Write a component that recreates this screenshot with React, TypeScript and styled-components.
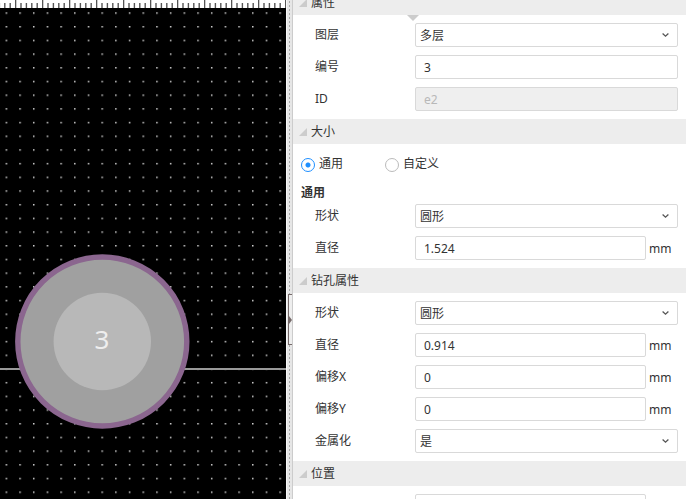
import React, { useId, useState } from "react";
import styled, { createGlobalStyle, css } from "styled-components";

const GlobalStyle = createGlobalStyle`
  *, *::before, *::after { box-sizing: border-box; }
  html, body, #root { height: 100%; }
  body {
    margin: 0;
    overflow: hidden;
    background: #fff;
    color: #333;
    font: 12px/24px "Noto Sans", "Noto Sans CJK SC", sans-serif;
  }
  input, select, button { font: inherit; color: inherit; margin: 0; }
`;

const Workspace = styled.div`
  display: grid;
  grid-template-columns: minmax(0, 286fr) 7px minmax(0, 393fr);
  height: 100vh;
  overflow: hidden;
`;

const CanvasPane = styled.main`
  display: flex;
  flex-direction: column;
  min-height: 0;
  background: #000;
  overflow: hidden;
`;

const Ruler = styled.svg`
  display: block;
  width: 100%;
  height: 8px;
  flex: none;
  background: #fff;
`;

const Board = styled.svg`
  display: block;
  width: 100%;
  flex: 1;
  min-height: 0;
`;

const Splitter = styled.div`
  display: flex;
  flex-direction: column;
  justify-content: center;
  padding: 140px 0 0 1px;
  border-left: 1px solid #f8f8f8;
  border-right: 1px solid #ccc;
  background-color: #e6e6e6;
  background-image: radial-gradient(circle, #aaa 0 1px, transparent 1px);
  background-size: 5px 4px;
`;

const CollapseButton = styled.button`
  display: flex;
  align-items: center;
  justify-content: flex-start;
  width: 4px;
  height: 51px;
  padding: 0;
  border: 1px solid #766a6a;
  border-right: 0;
  background: #eee;
  cursor: pointer;
`;

const Panel = styled.aside`
  min-width: 0;
  height: 100vh;
  overflow: hidden;
  background: #fff;
`;

const PanelScroll = styled.div`
  margin-top: -10px;
`;

const SectionHeader = styled.h2`
  display: flex;
  align-items: center;
  gap: 4px;
  height: 25px;
  margin: 0;
  padding-left: 6px;
  background: #ededed;
  font-size: 12px;
  font-weight: 400;
`;

const Fields = styled.div`
  position: relative;
  display: flex;
  flex-direction: column;
  gap: 8px;
  padding: 8px 8px 8px 22px;
`;

const DropMarker = styled.svg`
  position: absolute;
  top: 0;
  left: 114px;
`;

const Row = styled.div`
  display: grid;
  grid-template-columns: 100px minmax(0, 1fr);
  height: 24px;
`;

const Control = styled.div`
  position: relative;
  display: flex;
  gap: 3px;
`;

const box = css`
  flex: 1;
  min-width: 0;
  height: 24px;
  border: 1px solid #d9d9d9;
  border-radius: 2px;
  background: #fff;
  outline: none;
`;

const TextBox = styled.input`
  ${box}
  padding: 2px 8px 0;
  &:disabled {
    background: #efefef;
    color: #b8b8b8;
  }
`;

const SelectBox = styled.select`
  ${box}
  appearance: none;
  padding: 0 24px 0 4px;
`;

const Chevron = styled.svg`
  position: absolute;
  right: 9px;
  top: 10px;
  pointer-events: none;
`;

const Unit = styled.span`
  width: 29px;
  line-height: 26px;
`;

const ModeGroup = styled.div`
  display: flex;
  gap: 42px;
  height: 24px;
  margin: 8px 8px 4px;
`;

const ModeLabel = styled.label`
  display: flex;
  align-items: center;
  gap: 4px;
`;

const Radio = styled.input`
  appearance: none;
  width: 14px;
  height: 14px;
  border: 1px solid #bbb;
  border-radius: 50%;
  background: #fff;
  && { margin-top: 2px; }
  &:checked {
    border-color: #1e8fff;
    background: radial-gradient(circle, #1e8fff 0 2px, #fff 3px);
  }
`;

const GroupTitle = styled.h3`
  height: 24px;
  margin: 0 8px -8px;
  font-size: 12px;
  line-height: 26px;
  font-weight: 700;
`;

function Section({ title, children }: { title: string; children: React.ReactNode }) {
  return (
    <section>
      <SectionHeader>
        <svg width="8" height="8" viewBox="0 0 8 8" aria-hidden="true">
          <path d="M8 0V8H0Z" fill="#ccc" />
        </svg>
        {title}
      </SectionHeader>
      {children}
    </section>
  );
}

type FieldProps = { label?: string; value: string; unit?: string; disabled?: boolean };

function TextField({ label, value, unit, disabled }: FieldProps) {
  const id = useId();
  return (
    <Row>
      <label htmlFor={id}>{label}</label>
      <Control>
        <TextBox id={id} type="text" defaultValue={value} disabled={disabled} />
        {unit !== undefined && <Unit>{unit}</Unit>}
      </Control>
    </Row>
  );
}

function SelectField({ label, value }: FieldProps) {
  const id = useId();
  return (
    <Row>
      <label htmlFor={id}>{label}</label>
      <Control>
        <SelectBox id={id} defaultValue={value}>
          <option>{value}</option>
        </SelectBox>
        <Chevron width="7" height="5" viewBox="0 0 7 5" aria-hidden="true">
          <path d="M0.6 0.6L3.5 3.2L6.4 0.6" fill="none" stroke="#555" strokeWidth="1.3" />
        </Chevron>
      </Control>
    </Row>
  );
}

function PadCanvas() {
  return (
    <CanvasPane>
      <Ruler aria-hidden="true">
        <defs>
          <pattern id="ticks" x="15" width="27" height="8" patternUnits="userSpaceOnUse">
            <path d="M0.5 0V8" stroke="#555" />
            <path d="M1.5 0V8" stroke="#ccc" />
            <path d="M6 3V8M11.4 3V8M16.8 3V8M22.2 3V8" stroke="#555" strokeWidth="1.4" />
          </pattern>
        </defs>
        <rect width="100%" height="8" fill="url(#ticks)" />
      </Ruler>
      <Board role="img" aria-label="3">
        <defs>
          <pattern id="grid" x="5.6" y="4.3" width="13.69" height="13.69" patternUnits="userSpaceOnUse">
            <rect width="1.5" height="1.5" fill="#d0d0d0" />
          </pattern>
        </defs>
        <rect width="100%" height="100%" fill="url(#grid)" />
        <rect y="360" width="100%" height="2" fill="#999" />
        <circle cx="102.3" cy="333.5" r="84.5" fill="#a0a0a0" stroke="#8b668f" strokeWidth="5.4" />
        <circle cx="102.3" cy="333.5" r="48.7" fill="#b8b8b8" />
        <text x="102" y="341" textAnchor="middle" fontFamily="Noto Sans, sans-serif" fontSize="26" fill="#eee">
          3
        </text>
      </Board>
    </CanvasPane>
  );
}

export default function App() {
  const [mode, setMode] = useState("通用");
  return (
    <>
      <GlobalStyle />
      <Workspace>
        <PadCanvas />
        <Splitter>
          <CollapseButton aria-label="折叠">
            <svg width="3" height="8" viewBox="0 0 3 8" aria-hidden="true">
              <path d="M0 0L3 4L0 8Z" fill="#766a6a" />
            </svg>
          </CollapseButton>
        </Splitter>
        <Panel>
          <PanelScroll>
            <Section title="属性">
              <Fields>
                <DropMarker width="12" height="6" viewBox="0 0 12 6" aria-hidden="true">
                  <path d="M0 0H12L6 6Z" fill="#ccc" />
                </DropMarker>
                <SelectField label="图层" value="多层" />
                <TextField label="编号" value="3" />
                <TextField label="ID" value="e2" disabled />
              </Fields>
            </Section>
            <Section title="大小">
              <ModeGroup role="radiogroup" aria-label="大小">
                {["通用", "自定义"].map((name) => (
                  <ModeLabel key={name}>
                    <Radio type="radio" name="mode" checked={mode === name} onChange={() => setMode(name)} />
                    {name}
                  </ModeLabel>
                ))}
              </ModeGroup>
              <GroupTitle>通用</GroupTitle>
              <Fields>
                <SelectField label="形状" value="圆形" />
                <TextField label="直径" value="1.524" unit="mm" />
              </Fields>
            </Section>
            <Section title="钻孔属性">
              <Fields>
                <SelectField label="形状" value="圆形" />
                <TextField label="直径" value="0.914" unit="mm" />
                <TextField label="偏移X" value="0" unit="mm" />
                <TextField label="偏移Y" value="0" unit="mm" />
                <SelectField label="金属化" value="是" />
              </Fields>
            </Section>
            <Section title="位置">
              <Fields>
                <TextField value="" unit="" />
              </Fields>
            </Section>
          </PanelScroll>
        </Panel>
      </Workspace>
    </>
  );
}
